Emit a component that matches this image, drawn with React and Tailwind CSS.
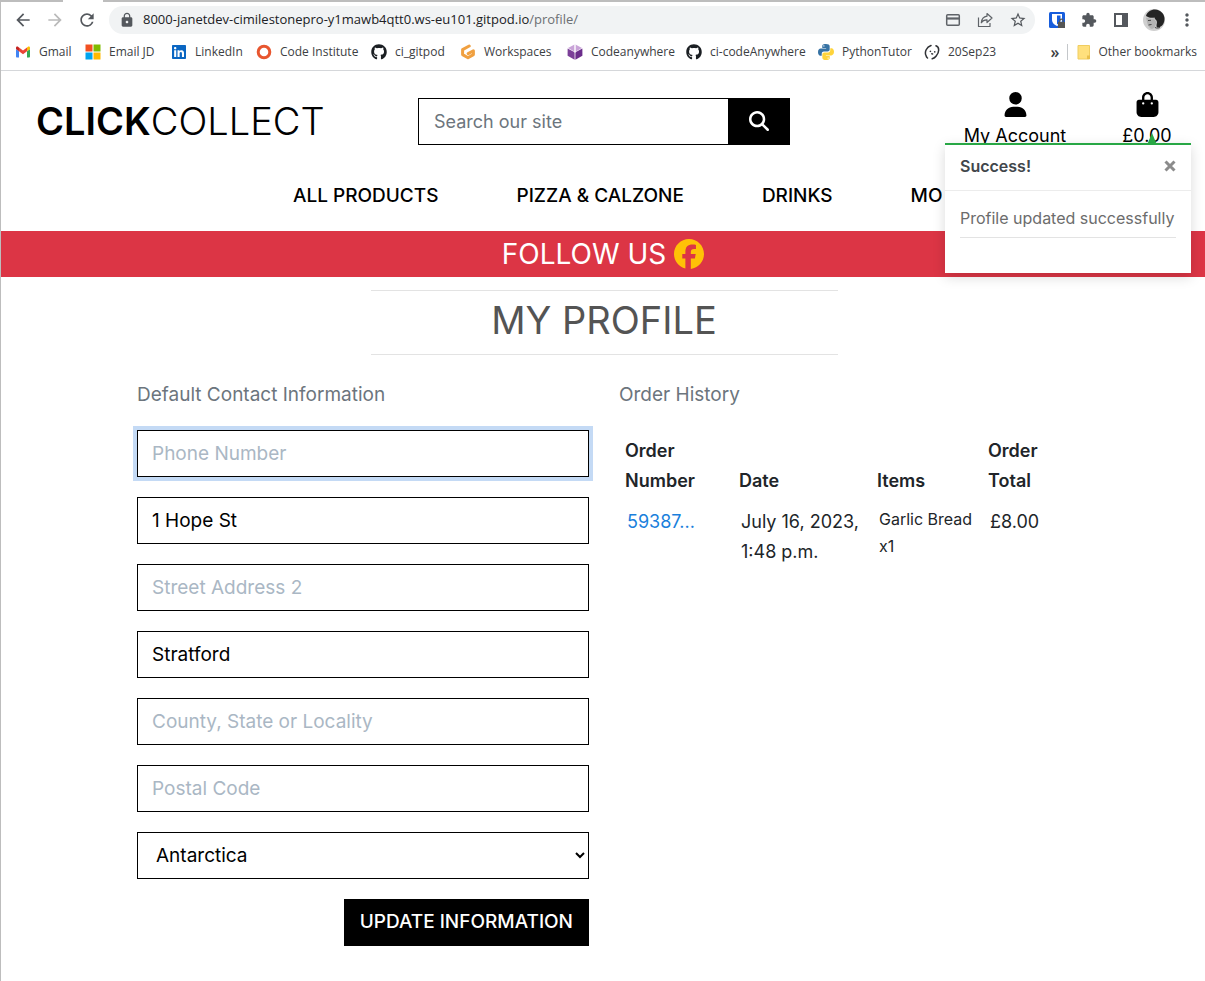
import { FaUser, FaBagShopping, FaMagnifyingGlass, FaFacebook, FaGithub, FaLinkedin } from 'react-icons/fa6';
import { MdArrowBack, MdArrowForward, MdRefresh, MdLock, MdExtension, MdStarBorder, MdMoreVert } from 'react-icons/md';

function GmailIcon() {
  return (
    <svg viewBox="0 0 16 16" className="size-4">
      <path d="M1 3.5v9c0 .5.4 1 1 1h2V7.2L1 5z" fill="#4285f4" />
      <path d="M15 3.5v9c0 .5-.4 1-1 1h-2V7.2L15 5z" fill="#34a853" />
      <path d="M4 7.3V3.4l4 3 4-3v3.9l-4 3z" fill="#ea4335" />
      <path d="M1 5V4c0-1.400 1.300-1.800 2.300-1.100L4 3.400v3.900z" fill="#c5221f" />
      <path d="M15 5V4c0-1.400-1.300-1.800-2.300-1.100L12 3.400v3.900z" fill="#fbbc04" />
    </svg>
  );
}

function MicrosoftIcon() {
  return (
    <svg viewBox="0 0 16 16" className="size-4">
      <path d="M0.500 0.500h7v7h-7z" fill="#f25022" />
      <path d="M8.500 0.500h7v7h-7z" fill="#7fba00" />
      <path d="M0.500 8.500h7v7h-7z" fill="#00a4ef" />
      <path d="M8.500 8.500h7v7h-7z" fill="#ffb900" />
    </svg>
  );
}

function RingIcon() {
  return (
    <svg viewBox="0 0 16 16" className="size-4">
      <circle cx="8" cy="8" r="5.800" fill="#fff" stroke="#e8562f" strokeWidth="3" />
    </svg>
  );
}

function GitpodIcon() {
  return (
    <svg viewBox="0 0 16 16" className="size-4" fill="none" stroke="#f0a040" strokeWidth="3" strokeLinejoin="round" strokeLinecap="round">
      <path d="M9.200 2 2.600 5.600v5L8 13.800l5.400-3.200V6.800L8.200 9.600" />
    </svg>
  );
}

function CubeIcon() {
  return (
    <svg viewBox="0 0 16 16" className="size-4">
      <path d="M8 0.300 15 4 8 8 1 4z" fill="#c9a3d8" />
      <path d="M0.600 4.400 7.600 8.300v7.400l-7-4z" fill="#7b3f98" />
      <path d="M15.400 4.400 8.400 8.300v7.400l7-4z" fill="#6b2d8b" />
      <path d="M8 0v8.500" stroke="#fff" strokeWidth="1.400" />
    </svg>
  );
}

function PythonIcon() {
  return (
    <svg viewBox="0 0 24 24" className="size-4">
      <path d="M11.900 0C6.500 0 6.400 2 6.400 3.500V6h5.800v.9H4C1.700 6.900 0 8.800 0 12.200s1.900 5.300 3.400 5.300h2.200v-2.900c0-1.900 1.500-3.200 3.100-3.200h5.800c1.600 0 3-1.300 3-3V3.500C17.500 1.200 15.400 0 11.900 0zM8.800 1.800a1 1 0 1 1 0 2.100 1 1 0 0 1 0-2.100z" fill="#3672a4" />
      <path d="M12.100 24c5.400 0 5.500-2 5.500-3.500V18h-5.800v-.9H20c2.300 0 4-1.900 4-5.300s-1.900-5.300-3.400-5.300h-2.200v2.900c0 1.900-1.500 3.200-3.100 3.200H9.500c-1.600 0-3 1.300-3 3v4.900c0 2.300 2.100 3.500 5.600 3.500zm3.100-1.800a1 1 0 1 1 0-2.100 1 1 0 0 1 0 2.100z" fill="#ffd43b" />
    </svg>
  );
}

function FaceIcon() {
  return (
    <svg viewBox="0 0 16 16" className="size-4" fill="none" stroke="#303236" strokeWidth="1.500" strokeLinecap="round">
      <path d="M7 1.500C2.500 3 .3 8 2 11.500c.3 1.200.7 1.900 1.500 2.500M12 1.800c3.800 1.200 3.300 6.800.2 10.200-1 1.400-2.500 2.400-4 2.800" />
      <path d="M6.300 7.300l.2.100M10.700 7.800l.1.100M7.800 9.800l.8.100" />
    </svg>
  );
}

function CardIcon() {
  return (
    <svg viewBox="0 0 16 16" className="size-4" fill="none" stroke="#5f6368" strokeWidth="1.500">
      <rect x="1.700" y="2.700" width="12.600" height="10.600" rx="1" />
      <path d="M2 6.500h12" strokeWidth="2.200" />
    </svg>
  );
}

function ShareIcon() {
  return (
    <svg viewBox="0 0 16 16" className="size-4" fill="none" stroke="#5f6368" strokeWidth="1.200" strokeLinejoin="round">
      <path d="M1.500 5.500v9H13v-3.500M10 4.200V1.500L15 6l-5 4.500V7.800C7.500 7.700 5.500 8.700 4.300 10.800 4.600 7.300 6.500 4.700 10 4.200z" />
    </svg>
  );
}

function VaultIcon() {
  return (
    <svg viewBox="0 0 16 16" className="size-4">
      <rect width="16" height="16" rx="1.500" fill="#175ddc" />
      <path d="M3 2h10v6c0 3-2.500 4.800-5 6-2.500-1.200-5-3-5-6z" fill="#fff" />
      <path d="M8 3.500h3.500V8c0 2-1.500 3.300-3.500 4.400z" fill="#175ddc" />
      <path d="M9 10h7v6H9z" fill="#555" />
      <path d="M10.800 10V8.800a1.700 1.700 0 0 1 3.400 0V10" fill="none" stroke="#555" strokeWidth="1.200" />
    </svg>
  );
}

function PanelIcon() {
  return (
    <svg viewBox="0 0 16 16" className="size-4">
      <path d="M1 1h14v14H1zM3 3v10h6V3z" fill="#54585d" fillRule="evenodd" />
    </svg>
  );
}

function AvatarIcon() {
  return (
    <svg viewBox="0 0 22 22" className="size-[22px]">
      <circle cx="11" cy="11" r="11" fill="#cfcfcf" />
      <path d="M3 7C4 3 8 .5 12 .5c6 .3 9.800 5 9.500 9.500-.2 4-2 7.500-6 8.500-1.500.2-2-.5-2-2 0-1.500.8-3 .2-4.500-.6-1.600-2-1.500-2.200-3.500-2 .5-5.500.5-8.500-1.500z" fill="#242424" />
      <path d="M3 8.500c3 1 5.500 1.500 8 .8.500 2 2 2.200 2.200 4 .1 2-1.200 2.700-1 5L9 20c-2-.5-3-2-4-3.500L4 13z" fill="#b4b4b4" />
      <path d="M5 11.500l3-.2M5.500 16l3-.5M12 18.500c2 1 3 .6 5 0" stroke="#444" strokeWidth="1" fill="none" />
    </svg>
  );
}

function FolderIcon() {
  return (
    <svg viewBox="0 0 16 16" className="size-4">
      <path d="M2 1.500h11.500V15H2z" fill="#ffe07d" stroke="#f0cd60" />
      <path d="M11 11.500h3V15h-3z" fill="#e9bf4c" />
    </svg>
  );
}

const bookmarks = [
  { label: 'Gmail', icon: <GmailIcon />, cell: 'w-[70px]' },
  { label: 'Email JD', icon: <MicrosoftIcon />, cell: 'w-[86px]' },
  { label: 'LinkedIn', icon: <FaLinkedin className="size-4 text-[#0a66c2]" />, cell: 'w-[85px]' },
  { label: 'Code Institute', icon: <RingIcon />, cell: 'w-[115px]' },
  { label: 'ci_gitpod', icon: <FaGithub className="size-4 text-[#1b1f23]" />, cell: 'w-[89px]' },
  { label: 'Workspaces', icon: <GitpodIcon />, cell: 'w-[107px]' },
  { label: 'Codeanywhere', icon: <CubeIcon />, cell: 'w-[119px]' },
  { label: 'ci-codeAnywhere', icon: <FaGithub className="size-4 text-[#1b1f23]" />, cell: 'w-[132px]' },
  { label: 'PythonTutor', icon: <PythonIcon />, cell: 'w-[106px]' },
  { label: '20Sep23', icon: <FaceIcon />, cell: 'w-[80px]' },
];

function BrowserBar() {
  return (
    <div className="border-b border-[#d5d7da] font-['Open_Sans',sans-serif] text-[#3c4043]">
      <div className="flex h-0.5 bg-[#bdbdbd]">
        <div className="ml-[62px] w-[40px] bg-white" />
      </div>
      <div className="flex h-9 items-center pl-3 pr-2">
        <div className="flex w-24 shrink-0 items-center gap-3 text-[20px] text-[#54585d]">
          <button type="button" aria-label="Back"><MdArrowBack /></button>
          <button type="button" aria-label="Forward" className="text-[#bababa]"><MdArrowForward /></button>
          <button type="button" aria-label="Reload"><MdRefresh /></button>
        </div>
        <div className="flex h-7 min-w-0 flex-1 items-center gap-4 rounded-full bg-[#f1f3f4] pl-2.5 pr-2">
          <MdLock className="-mr-2 size-4 text-[#54585d]" />
          <div className="min-w-0 flex-1 truncate text-[13px] text-[#202124]">
            8000-janetdev-cimilestonepro-y1mawb4qtt0.ws-eu101.gitpod.io<span className="text-[#6b6f73]">/profile/</span>
          </div>
          <button type="button" aria-label="Payment methods"><CardIcon /></button>
          <button type="button" aria-label="Share"><ShareIcon /></button>
          <button type="button" aria-label="Bookmark this page" className="text-[#54585d]"><MdStarBorder className="size-[18px]" /></button>
        </div>
        <div className="ml-3.5 flex items-center gap-4 text-[#54585d]">
          <button type="button" aria-label="Password manager"><VaultIcon /></button>
          <button type="button" aria-label="Extensions"><MdExtension className="size-4" /></button>
          <button type="button" aria-label="Side panel"><PanelIcon /></button>
          <button type="button" aria-label="Profile" className="-ml-0.5"><AvatarIcon /></button>
          <button type="button" aria-label="Menu" className="-ml-1"><MdMoreVert className="size-5" /></button>
        </div>
      </div>
      <nav aria-label="Bookmarks" className="flex h-8 items-center pb-1 pl-3.5 pr-2 text-[12px]">
        {bookmarks.map((b) => (
          <a key={b.label} href="#" className={`flex shrink-0 items-center gap-2 whitespace-nowrap ${b.cell}`}>
            {b.icon}
            {b.label}
          </a>
        ))}
        <div className="ml-auto flex items-center gap-2">
          <span className="text-[16px] font-semibold leading-4">»</span>
          <span className="h-4 w-px bg-[#c4c7ca]" />
          <a href="#" className="flex items-center gap-1.5 whitespace-nowrap"><FolderIcon />Other bookmarks</a>
        </div>
      </nav>
    </div>
  );
}

function Toast() {
  return (
    <div role="status" className="absolute right-[14px] top-[72px] w-[246px] border-t-2 border-[#28a745] bg-white pb-[35px] shadow-[0_4px_12px_rgba(0,0,0,0.15)]">
      <svg viewBox="0 0 10 12" className="absolute -top-3 left-[202px] h-3 w-2.5"><path d="M5 0l5 12H0z" fill="#28a745" /></svg>
      <div className="flex h-[46px] items-center justify-between border-b border-[#ececec] px-[15px] pb-1">
        <strong className="text-[16px] font-semibold text-[#41464b]">Success!</strong>
        <button type="button" aria-label="Close" className="text-[#8b8b8b]">
          <svg viewBox="0 0 12 12" className="size-3" stroke="currentColor" strokeWidth="3"><path d="M1.500 1.500l9 9M10.500 1.500l-9 9" /></svg>
        </button>
      </div>
      <div className="mx-[15px] h-[47px] whitespace-nowrap border-b border-[#e3e3e3] pt-[15px] text-[16px] leading-6 text-[#6c6c6c]">
        Profile updated successfully
      </div>
    </div>
  );
}

function Header() {
  return (
    <header className="text-black">
      <div className="flex h-[89px] items-start">
        <a href="#" className="w-[417px] shrink-0 pl-[35px] pt-[26px] text-[38px] leading-[48px]">
          <span className="font-semibold">CLICK</span><span className="font-light">COLLECT</span>
        </a>
        <form className="mt-[27px] flex h-[47px] w-[372px] border border-black" onSubmit={(e) => e.preventDefault()}>
          <input type="search" aria-label="Search our site" placeholder="Search our site" className="min-w-0 flex-1 px-[15px] text-[18px] outline-none placeholder:text-[#6c757d]" />
          <button type="submit" aria-label="Search" className="flex w-[61px] items-center justify-center bg-black pb-0.5 text-white"><FaMagnifyingGlass className="size-5" /></button>
        </form>
        <div className="ml-auto flex gap-10 pr-8 pt-[21px] text-[18px] leading-[30px]">
          <a href="#" className="flex w-[132px] flex-col items-center whitespace-nowrap">
            <FaUser className="size-[25px]" />
            <span className="mt-1">My Account</span>
          </a>
          <a href="#" className="flex w-[52px] flex-col items-center">
            <FaBagShopping className="size-[25px]" />
            <span className="mt-1">£0.00</span>
          </a>
        </div>
      </div>
      <nav aria-label="Main" className="flex h-[71px] items-center gap-[78px] overflow-hidden whitespace-nowrap pl-[292px] pt-0.5 text-[19px] font-medium">
        <a href="#">ALL PRODUCTS</a>
        <a href="#">PIZZA &amp; CALZONE</a>
        <a href="#">DRINKS</a>
        <a href="#">MO</a>
      </nav>
    </header>
  );
}

const fields = [
  { id: 'phone', label: 'Phone Number', value: '', focused: true },
  { id: 'street1', label: 'Street Address 1', value: '1 Hope St' },
  { id: 'street2', label: 'Street Address 2', value: '' },
  { id: 'town', label: 'Town or City', value: 'Stratford' },
  { id: 'county', label: 'County, State or Locality', value: '' },
  { id: 'postcode', label: 'Postal Code', value: '' },
];

function ProfileForm() {
  return (
    <section>
      <h2 className="text-[19px] leading-[30px] text-[#6c757d]">Default Contact Information</h2>
      <form className="mt-5 flex flex-col gap-5" onSubmit={(e) => e.preventDefault()}>
        {fields.map((f) => (
          <input
            key={f.id}
            id={f.id}
            type="text"
            aria-label={f.label}
            placeholder={f.label}
            defaultValue={f.value}
            className={`h-[47px] w-full border border-black px-3.5 text-[19px] outline-none placeholder:text-[#aab7c4] ${f.focused ? 'ring-4 ring-[#c4daf5]' : ''}`}
          />
        ))}
        <select aria-label="Country" defaultValue="Antarctica" className="h-[47px] w-full border border-black bg-white pl-3.5 text-[19px]">
          <option>Antarctica</option>
          <option>United Kingdom</option>
        </select>
        <button type="submit" className="h-[47px] self-end bg-black px-4 text-[19px] font-medium text-white">UPDATE INFORMATION</button>
      </form>
    </section>
  );
}

function OrderHistory() {
  return (
    <section>
      <h2 className="text-[19px] leading-[30px] text-[#6c757d]">Order History</h2>
      <table className="mt-[26px] w-full table-fixed text-left text-[18px] leading-[30px] text-[#212529]">
        <thead>
          <tr className="align-bottom">
            <th className="w-[114px] pb-1.5 pl-1.5 pr-4 font-semibold">Order Number</th>
            <th className="w-[138px] pb-1.5 pl-1.5 font-semibold">Date</th>
            <th className="w-[111px] pb-1.5 pl-1.5 font-semibold">Items</th>
            <th className="pb-1.5 pl-1.5 pr-6 font-semibold">Order Total</th>
          </tr>
        </thead>
        <tbody>
          <tr className="align-top">
            <td className="pl-2 pt-[5px]"><a href="#" className="text-[#1a7fdc]">59387...</a></td>
            <td className="pl-2 pt-[5px]">July 16, 2023, 1:48 p.m.</td>
            <td className="pl-2 pt-1 text-[16px] leading-[27px]">Garlic Bread x1</td>
            <td className="pl-2 pt-[5px]">£8.00</td>
          </tr>
        </tbody>
      </table>
    </section>
  );
}

export default function App() {
  return (
    <div className="min-h-screen border-l border-[#bdbdbd] bg-white font-['Inter',sans-serif]">
      <BrowserBar />
      <div className="relative">
        <Header />
        <a href="#" className="flex h-[46px] items-center justify-center gap-2 bg-[#dc3545] text-[28px] text-white">
          FOLLOW US <FaFacebook className="size-[30px] text-[#ffc107]" />
        </a>
        <Toast />
      </div>
      <main className="mx-auto max-w-[966px] pl-[17px] pr-[15px] pt-[13px]">
        <h1 className="mx-auto h-[65px] w-1/2 border-y border-[#e3e3e3] text-center text-[38px] leading-[58px] text-[#545454]">MY PROFILE</h1>
        <div className="mt-[25px] grid grid-cols-2 gap-[30px]">
          <ProfileForm />
          <OrderHistory />
        </div>
      </main>
    </div>
  );
}
